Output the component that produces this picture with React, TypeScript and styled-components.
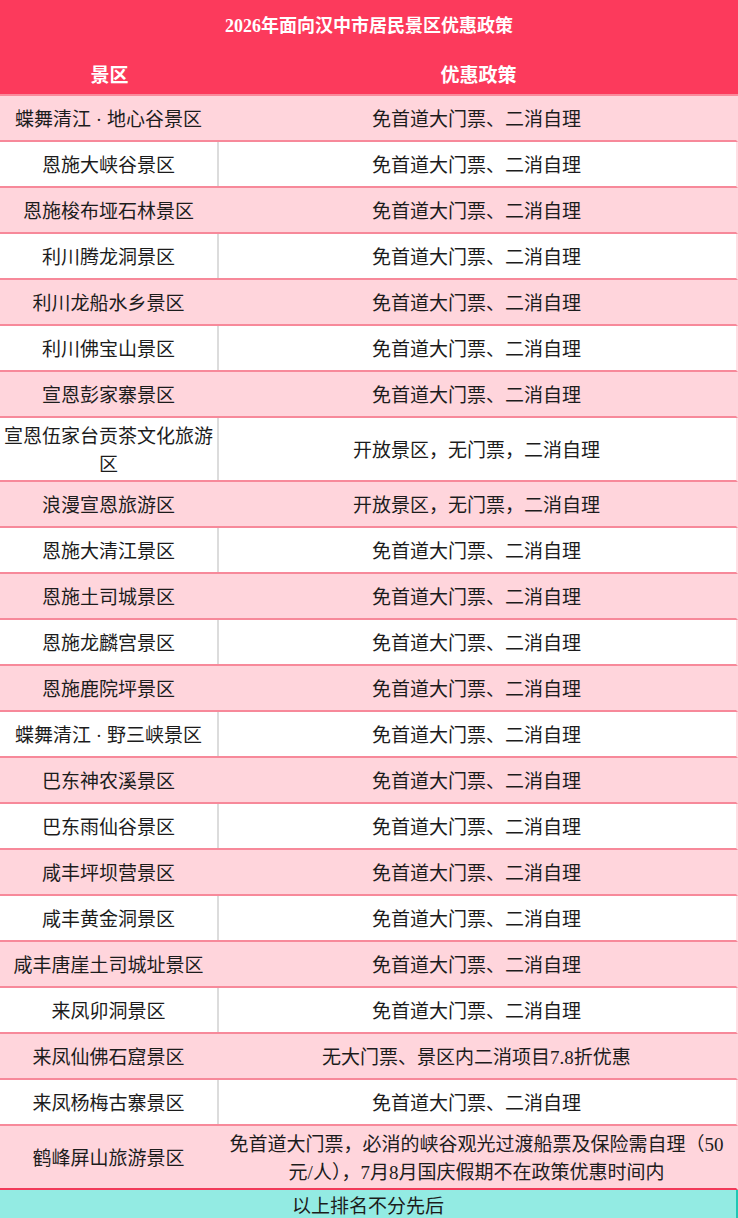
import styled, { createGlobalStyle } from 'styled-components';

const GlobalStyle = createGlobalStyle`
  html, body {
    margin: 0;
    padding: 0;
    background: #ffffff;
  }
  body {
    font-family: 'Liberation Serif', 'Noto Sans CJK SC', serif;
    color: #1c1c1c;
  }
`;

const Table = styled.div`
  width: 738px;
  display: flex;
  flex-direction: column;
`;

const TitleBar = styled.div`
  height: 48px;
  display: flex;
  align-items: center;
  justify-content: center;
  background: #fc3a5c;
  color: #ffffff;
  font-size: 18px;
  font-weight: 700;
`;

const HeadRow = styled.div`
  display: grid;
  grid-template-columns: 219px 1fr;
  height: 46px;
  background: #fc3a5c;
  border-bottom: 2px solid #fa8a9b;
  color: #ffffff;
  font-size: 19px;
  font-weight: 700;
`;

const HeadCell = styled.div`
  display: flex;
  align-items: center;
  justify-content: center;
  padding-top: 4px;
`;

const Row = styled.div<{ $pink: boolean; $last?: boolean }>`
  display: grid;
  grid-template-columns: 219px 1fr;
  min-height: 44px;
  background: ${(p) => (p.$pink ? '#ffd5dc' : '#ffffff')};
  border-bottom: 2px solid ${(p) => (p.$last ? '#f23a59' : '#f7899a')};
  border-right: 2px solid ${(p) => (p.$pink ? '#ffd5dc' : '#ffdfe4')};
  font-size: 19px;
  line-height: 28px;
`;

const Cell = styled.div<{ $divider?: boolean }>`
  display: flex;
  align-items: center;
  justify-content: center;
  text-align: center;
  padding: 5px 2px 1px;
  border-right: 2px solid ${(p) => (p.$divider ? '#dcdcdc' : 'transparent')};
`;

const PolicyCell = styled(Cell)`
  padding: 5px 8px 1px;
`;

const Footer = styled.div`
  height: 28px;
  display: flex;
  align-items: center;
  justify-content: center;
  background: #93ebe3;
  border-bottom: 2px solid #1fc7b5;
  border-right: 2px solid #1fc7b5;
  font-size: 19px;
`;

const STD = '免首道大门票、二消自理';
const OPEN = '开放景区，无门票，二消自理';

const rows: [string, string][] = [
  ['蝶舞清江 · 地心谷景区', STD],
  ['恩施大峡谷景区', STD],
  ['恩施梭布垭石林景区', STD],
  ['利川腾龙洞景区', STD],
  ['利川龙船水乡景区', STD],
  ['利川佛宝山景区', STD],
  ['宣恩彭家寨景区', STD],
  ['宣恩伍家台贡茶文化旅游区', OPEN],
  ['浪漫宣恩旅游区', OPEN],
  ['恩施大清江景区', STD],
  ['恩施土司城景区', STD],
  ['恩施龙麟宫景区', STD],
  ['恩施鹿院坪景区', STD],
  ['蝶舞清江 · 野三峡景区', STD],
  ['巴东神农溪景区', STD],
  ['巴东雨仙谷景区', STD],
  ['咸丰坪坝营景区', STD],
  ['咸丰黄金洞景区', STD],
  ['咸丰唐崖土司城址景区', STD],
  ['来凤卯洞景区', STD],
  ['来凤仙佛石窟景区', '无大门票、景区内二消项目7.8折优惠'],
  ['来凤杨梅古寨景区', STD],
  [
    '鹤峰屏山旅游景区',
    '免首道大门票，必消的峡谷观光过渡船票及保险需自理（50元/人），7月8月国庆假期不在政策优惠时间内',
  ],
];

export default function App() {
  return (
    <>
      <GlobalStyle />
      <Table>
        <TitleBar>2026年面向汉中市居民景区优惠政策</TitleBar>
        <HeadRow>
          <HeadCell>景区</HeadCell>
          <HeadCell>优惠政策</HeadCell>
        </HeadRow>
        {rows.map(([name, policy], i) => {
          const pink = i % 2 === 0;
          return (
            <Row key={name} $pink={pink} $last={i === rows.length - 1}>
              <Cell $divider={!pink}>{name}</Cell>
              <PolicyCell>{policy}</PolicyCell>
            </Row>
          );
        })}
        <Footer>以上排名不分先后</Footer>
      </Table>
    </>
  );
}
